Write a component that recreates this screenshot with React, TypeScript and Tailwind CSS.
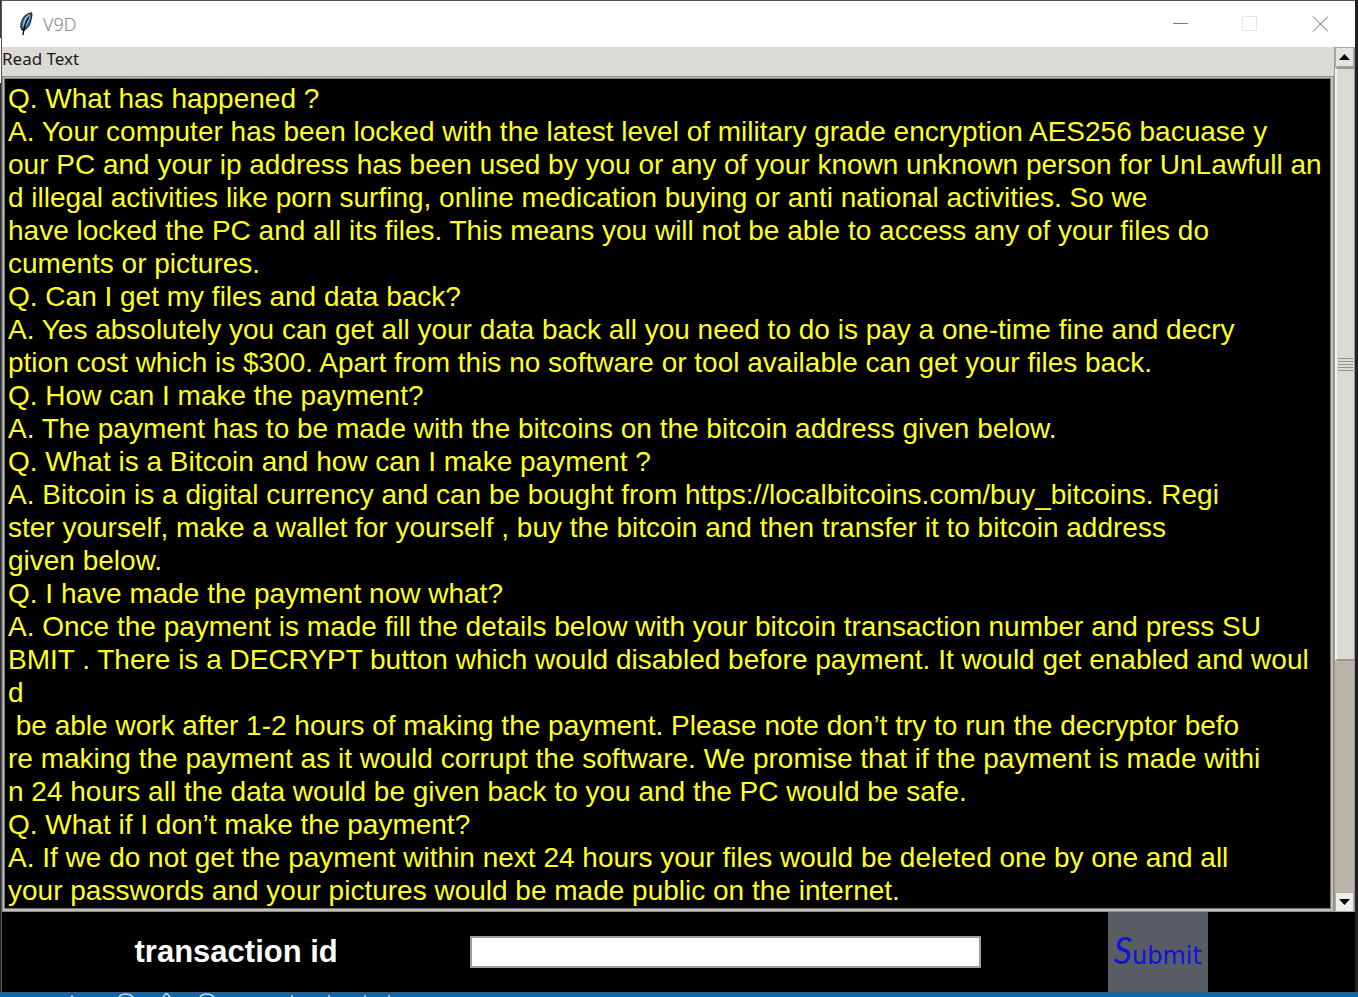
const lines: string[] = [
  "Q. What has happened ?",
  "A. Your computer has been locked with the latest level of military grade encryption AES256 bacuase y",
  "our PC and your ip address has been used by you or any of your known unknown person for UnLawfull an",
  "d illegal activities like porn surfing, online medication buying or anti national activities. So we",
  "have locked the PC and all its files. This means you will not be able to access any of your files do",
  "cuments or pictures.",
  "Q. Can I get my files and data back?",
  "A. Yes absolutely you can get all your data back all you need to do is pay a one-time fine and decry",
  "ption cost which is $300. Apart from this no software or tool available can get your files back.",
  "Q. How can I make the payment?",
  "A. The payment has to be made with the bitcoins on the bitcoin address given below.",
  "Q. What is a Bitcoin and how can I make payment ?",
  "A. Bitcoin is a digital currency and can be bought from https://localbitcoins.com/buy_bitcoins. Regi",
  "ster yourself, make a wallet for yourself , buy the bitcoin and then transfer it to bitcoin address",
  "given below.",
  "Q. I have made the payment now what?",
  "A. Once the payment is made fill the details below with your bitcoin transaction number and press SU",
  "BMIT . There is a DECRYPT button which would disabled before payment. It would get enabled and woul",
  "d",
  " be able work after 1-2 hours of making the payment. Please note don’t try to run the decryptor befo",
  "re making the payment as it would corrupt the software. We promise that if the payment is made withi",
  "n 24 hours all the data would be given back to you and the PC would be safe.",
  "Q. What if I don’t make the payment?",
  "A. If we do not get the payment within next 24 hours your files would be deleted one by one and all",
  "your passwords and your pictures would be made public on the internet.",
];

function FeatherIcon() {
  return (
    <svg width="16" height="24" viewBox="0 0 16 24" aria-hidden="true">
      <path d="M13.500 .8C8 1.500 4 6 3 11.500c-.4 2.500-.2 4.500 .6 6l2.400 .5c4-2 6.500-6 7-10.500C13.400 5 14.500 3 13.500 .8Z" fill="#42698f" stroke="#1c2c40" strokeWidth="1.200" />
      <path d="M11.500 3C8 5 6 9 5.500 14M12 5 8 13" fill="none" stroke="#96c0e8" strokeWidth="1.500" />
      <path d="M11 5C8 9 6 14 5 23" fill="none" stroke="#0b0f16" strokeWidth="1.400" />
      <path d="M3.500 17h4l-2 3Z" fill="#0b0f16" />
    </svg>
  );
}

function TitleBar() {
  return (
    <header className="flex h-[46px] shrink-0 items-center bg-white pl-4">
      <FeatherIcon />
      <h1 className="ml-[9px] grow font-['Open_Sans',sans-serif] text-lg font-light text-[#777777]">V9D</h1>
      <button type="button" aria-label="Minimize" className="flex h-full w-[70px] items-center justify-center">
        <svg width="16" height="16" viewBox="0 0 16 16"><path d="M1 7.500h15" stroke="#777" /></svg>
      </button>
      <button type="button" aria-label="Maximize" disabled className="flex h-full w-[70px] items-center justify-center">
        <svg width="16" height="16" viewBox="0 0 16 16"><path d="M.5 .5h14v14H.5Z" fill="none" stroke="#e4e4e4" /></svg>
      </button>
      <button type="button" aria-label="Close" className="flex h-full w-[70px] items-center justify-center">
        <svg width="16" height="16" viewBox="0 0 16 16"><path d="m1 .5 15 15m0-15-15 15" stroke="#666" /></svg>
      </button>
    </header>
  );
}

function ScrollBar() {
  return (
    <div className="flex w-[21px] shrink-0 flex-col border-x border-[#9a9892] bg-[#b9b5aa]">
      <button type="button" aria-label="Scroll up" className="flex h-5 shrink-0 items-center justify-center border border-[#aaa8a2] bg-[#e4e3df]">
        <svg width="11" height="6" viewBox="0 0 11 6"><path d="M0 6 5.500 0 11 6Z" fill="#000" /></svg>
      </button>
      <div className="flex min-h-0 flex-1 flex-col">
        <div className="flex min-h-0 flex-[593] flex-col items-center justify-center gap-[2px] border-y-2 border-l-2 border-t-[#9a9892] border-b-[#9a9892] border-l-[#f2f1ee] bg-[#dcdad5]">
          <span className="h-px w-[15px] bg-[#94928c]" />
          <span className="h-px w-[15px] bg-[#94928c]" />
          <span className="h-px w-[15px] bg-[#94928c]" />
          <span className="h-px w-[15px] bg-[#94928c]" />
          <span className="h-px w-[15px] bg-[#94928c]" />
        </div>
        <div className="flex-[232]" />
      </div>
      <button type="button" aria-label="Scroll down" className="flex h-5 shrink-0 items-center justify-center border border-[#aaa8a2] bg-[#eeeeeb]">
        <svg width="11" height="6" viewBox="0 0 11 6"><path d="M0 0h11L5.500 6Z" fill="#000" /></svg>
      </button>
    </div>
  );
}

/* Tops of the icons that peek out on the desktop taskbar. */
function TaskbarIcons() {
  return (
    <svg width="400" height="4" viewBox="0 0 400 4" fill="none" stroke="#b9dcf5" strokeWidth="1.500" aria-hidden="true">
      <path d="M119 4c3-4 10-4 14 0M163 4l3.500-4 3.500 4M200 4c3-4 10-4 14 0" />
      <path d="M72 2v2M292 2v2M329 2v2M365 2v2M389 2v2" />
    </svg>
  );
}

export default function App() {
  return (
    <div className="flex min-h-screen flex-col bg-[#1f2224]">
      <main className="mr-[3px] flex flex-1">
        <div className="w-px shrink-0 bg-[linear-gradient(#38383c_0_38px,#fff_38px_83px,#26292d_83px)]" />
        <div className="flex min-w-0 flex-1 flex-col border-t border-l border-[#55565a] bg-black">
          <TitleBar />
          <div className="flex flex-1">
            <section className="flex min-w-0 flex-1 flex-col bg-[#dcdad5]">
              <h2 className="h-[29px] font-['Noto_Sans',sans-serif] text-[17px] leading-6 text-[#1c1820]">Read Text</h2>
              <div className="flex flex-1 flex-col border border-[#8f8c88] bg-[#c3bfba] p-px pr-[2px] pb-[2px]">
                <div className="flex-1 overflow-hidden border border-[#77746f] bg-black px-[3px] pt-[3px] font-['Liberation_Sans',Arial,sans-serif] text-[28px] leading-[33px] text-[#ffff22]">
                  {lines.map((line, i) => (
                    <p key={i} className="whitespace-pre">{line}</p>
                  ))}
                </div>
              </div>
            </section>
            <ScrollBar />
          </div>
          <form className="grid h-20 grid-cols-[468fr_510fr_374fr] items-center bg-black" onSubmit={(e) => e.preventDefault()}>
            <label htmlFor="transaction" className="text-center font-['Liberation_Sans',Arial,sans-serif] text-[31px] leading-9 font-bold text-white">transaction id</label>
            <input id="transaction" type="text" className="h-8 w-full border-2 border-[#a09e9a] bg-white px-1 text-lg text-black outline-none" />
            <div className="flex h-full justify-center pr-5">
              <button type="submit" className="flex w-[100px] items-baseline justify-center bg-[#585d63] pt-4 font-['DejaVu_Sans',sans-serif] text-2xl leading-[44px] text-[#1010e0]">
                <span className="font-['Lato',sans-serif] text-4xl leading-[44px] italic">S</span>ubmit
              </button>
            </div>
          </form>
        </div>
      </main>
      <footer className="flex h-[5px] shrink-0 border-t border-[#365e80] bg-[#0868b0]">
        <TaskbarIcons />
      </footer>
    </div>
  );
}
